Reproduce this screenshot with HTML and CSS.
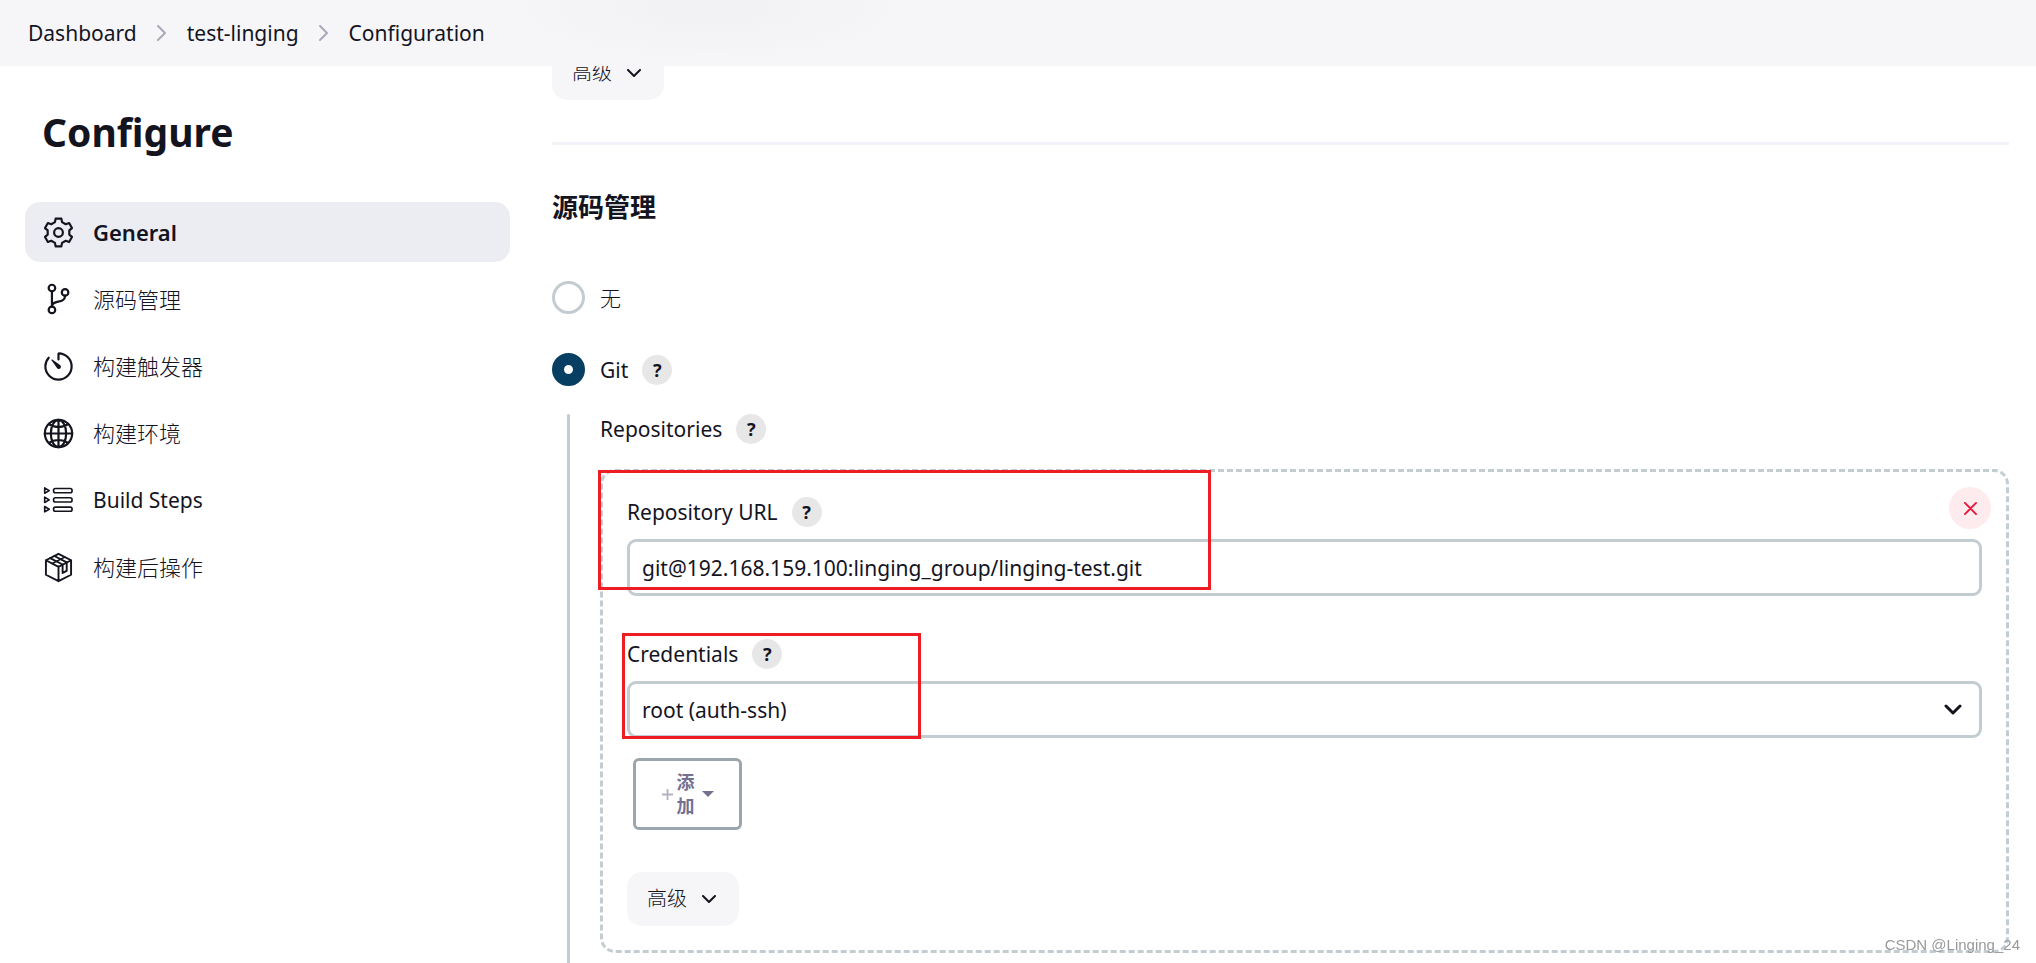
FILE: index.html
```html
<!DOCTYPE html>
<html lang="zh-CN">
<head>
<meta charset="utf-8">
<title>test-linging Config</title>
<link rel="stylesheet" href="styles.css">
</head>
<body>
<header class="breadcrumb-bar">
  <nav class="breadcrumbs" aria-label="Breadcrumb">
    <a href="#">Dashboard</a>
    <svg class="crumb-sep" viewBox="0 0 10 16" aria-hidden="true"><path d="M1 1l7 7-7 7"/></svg>
    <a href="#">test-linging</a>
    <svg class="crumb-sep" viewBox="0 0 10 16" aria-hidden="true"><path d="M1 1l7 7-7 7"/></svg>
    <a href="#">Configuration</a>
  </nav>
</header>
<div class="layout">
  <aside class="side-panel">
    <h1 class="page-title">Configure</h1>
    <nav class="tasks">
      <a class="task task-active" href="#general">
        <svg class="task-icon" viewBox="0 0 512 512" aria-hidden="true"><circle cx="256" cy="256" r="64"/><path d="M204 104L214 53H298L308 104 362 135 411 118 453 191 414 225V287L453 321 411 394 362 377 308 408 298 459H214L204 408 150 377 101 394 59 321 98 287V225L59 191 101 118 150 135z"/></svg>
        General
      </a>
      <a class="task" href="#scm">
        <svg class="task-icon" viewBox="0 0 512 512" aria-hidden="true"><circle cx="160" cy="88" r="48"/><circle cx="160" cy="408" r="48"/><circle cx="352" cy="152" r="48"/><path d="M160 360V136M352 200c0 128-192 48-192 160"/></svg>
        源码管理
      </a>
      <a class="task" href="#triggers">
        <svg class="task-icon" viewBox="0 0 512 512" aria-hidden="true"><path d="M112.91 128A191.85 191.85 0 0064 254c-1.18 106.35 85.65 193.8 192 194 106.2.2 192-85.83 192-192 0-104.54-83.55-189.61-187.5-192a4.36 4.36 0 00-4.5 4.37V152"/><path class="solid" d="M233.38 278.63l-79-113a8.13 8.13 0 0111.32-11.32l113 79a32.5 32.5 0 01-37.25 53.26 33.21 33.21 0 01-8.07-7.94z"/></svg>
        构建触发器
      </a>
      <a class="task" href="#environment">
        <svg class="task-icon" viewBox="0 0 512 512" aria-hidden="true"><circle cx="256" cy="256" r="200"/><path d="M256 56c-58.07 0-112.67 89.13-112.67 200S197.93 456 256 456s112.67-89.13 112.67-200S314.07 56 256 56zM117.33 117.33c38.24 27.15 86.38 43.34 138.67 43.34s100.43-16.19 138.67-43.34M394.67 394.67c-38.24-27.15-86.38-43.34-138.67-43.34s-100.43 16.19-138.67 43.34M256 56v400M456 256H56"/></svg>
        构建环境
      </a>
      <a class="task task-latin" href="#build-steps">
        <svg class="task-icon task-icon-thin" viewBox="0 0 512 512" aria-hidden="true"><rect x="184" y="80" width="270" height="62" rx="26"/><rect x="184" y="216" width="270" height="62" rx="26"/><rect x="184" y="352" width="270" height="62" rx="26"/><path d="M54 72v78l66-39zM54 208v78l66-39zM54 344v78l66-39z"/></svg>
        Build Steps
      </a>
      <a class="task" href="#post-build">
        <svg class="task-icon task-icon-thin" viewBox="0 0 512 512" aria-hidden="true"><path class="outline" d="M256 56L440 150V362L256 456 72 362V150zM72 150L256 246 440 150M256 246V456"/><path class="outline" d="M134 118L316 212V336L376 304V182L196 88"/><path d="M164 198L348 104"/></svg>
        构建后操作
      </a>
    </nav>
  </aside>
  <main class="main-panel">
    <button type="button" class="advanced">高级 <svg class="chevron" viewBox="0 0 14 9" aria-hidden="true"><path d="M1 1l6 6 6-6"/></svg></button>
    <hr class="divider">
    <h2 class="section-title" id="scm">源码管理</h2>
    <div class="radio-row">
      <input class="radio" type="radio" name="scm" id="scm-none"><label class="light" for="scm-none">无</label>
    </div>
    <div class="radio-row">
      <input class="radio" type="radio" name="scm" id="scm-git" checked><label for="scm-git">Git</label>
      <button type="button" class="help" aria-label="Help for Git">?</button>
    </div>
    <div class="nested">
      <div class="label-row"><span>Repositories</span><button type="button" class="help" aria-label="Help for Repositories">?</button></div>
      <section class="repo">
        <button type="button" class="remove" aria-label="Delete"><svg viewBox="0 0 14 14" aria-hidden="true"><path d="M1 1l12 12M13 1L1 13"/></svg></button>
        <div class="field">
          <div class="label-row"><label for="repo-url">Repository URL</label><button type="button" class="help" aria-label="Help for Repository URL">?</button></div>
          <input class="control" id="repo-url" type="text" value="git@192.168.159.100:linging_group/linging-test.git" spellcheck="false">
        </div>
        <div class="field">
          <div class="label-row"><label for="credentials">Credentials</label><button type="button" class="help" aria-label="Help for Credentials">?</button></div>
          <div class="select-wrap">
            <select class="control" id="credentials"><option>root (auth-ssh)</option></select>
            <svg class="select-arrow" viewBox="0 0 18 11" aria-hidden="true"><path d="M2 2l7 7 7-7"/></svg>
          </div>
        </div>
        <button type="button" class="add"><svg class="plus" viewBox="0 0 12 12" aria-hidden="true"><path d="M6 0v12M0 6h12"/></svg><span class="add-text">添加</span><svg class="caret" viewBox="0 0 12 6" aria-hidden="true"><path d="M0 0h12L6 6z"/></svg></button>
        <button type="button" class="advanced">高级 <svg class="chevron" viewBox="0 0 14 9" aria-hidden="true"><path d="M1 1l6 6 6-6"/></svg></button>
        <div class="mark mark-url"></div>
        <div class="mark mark-credentials"></div>
      </section>
    </div>
  </main>
</div>
<div class="watermark">CSDN @Linging_24</div>
</body>
</html>
```
FILE: styles.css
```css
:root {
  --text: #14141f;
  --line: #c3ccd1;
  --soft: #f6f6f9;
  --red: #ee1c23;
}
* { box-sizing: border-box; }
body {
  margin: 0;
  background: #fff;
  color: var(--text);
  font: 400 21px/30px "Noto Sans", "Noto Sans CJK SC", sans-serif;
}
a { color: inherit; text-decoration: none; }
button, input, select { font: inherit; color: inherit; }
button { cursor: pointer; border: 0; }
svg { display: block; flex: none; fill: none; stroke: currentColor; stroke-linecap: round; stroke-linejoin: round; }
.light { font-weight: 300; }

.breadcrumb-bar {
  position: fixed;
  inset: 0 0 auto;
  z-index: 2;
  height: 66px;
  padding: 0 28px;
  display: flex;
  align-items: center;
  background: radial-gradient(ellipse 190px 50px at 710px 8px, #f2f2f5 30%, transparent) #f6f6f9;
}
.breadcrumbs { display: flex; align-items: center; gap: 20px; }
.crumb-sep { width: 10px; height: 16px; stroke: #a9a9bd; stroke-width: 2; }

.layout {
  display: grid;
  grid-template-columns: 485px minmax(0, 1fr);
  gap: 42px;
  min-height: 100vh;
  padding: 0 27px 0 25px;
}
.side-panel { padding-top: 107px; }
.page-title { margin: 0 0 45px; padding-left: 17px; font-size: 39px; line-height: 50px; font-weight: 700; }
.tasks { display: flex; flex-direction: column; gap: 7px; }
.task { display: flex; align-items: center; gap: 17px; height: 60px; padding: 0 16px; border-radius: 15px; font-size: 22px; font-weight: 300; }
.task-latin { font-size: 21px; font-weight: 400; }
.task-active { background: #ecedf3; font-weight: 600; }
.task-icon { width: 35px; height: 35px; stroke-width: 32; }
.task-icon-thin { stroke-width: 24; }
.outline { stroke-width: 28; }
.solid { fill: currentColor; stroke: none; }

.main-panel { display: flex; flex-direction: column; align-items: stretch; padding-top: 46px; }
.advanced {
  align-self: flex-start;
  display: flex;
  align-items: center;
  gap: 15px;
  height: 54px;
  padding: 0 23px 0 20px;
  border-radius: 15px;
  background: var(--soft);
  font-size: 20px;
  font-weight: 300;
}
.chevron { width: 14px; height: 9px; stroke-width: 2; }
.divider { width: 100%; height: 3px; margin: 42px 0; border: 0; background: #f2f2f8; }
.section-title { margin: 0 0 54px; font-size: 26px; line-height: 40px; font-weight: 700; }
.radio-row { display: flex; align-items: center; height: 33px; margin-bottom: 39px; }
.radio {
  appearance: none;
  width: 33px;
  height: 33px;
  margin: 0 15px 0 0;
  border: 3px solid var(--line);
  border-radius: 50%;
}
.radio:checked { border: 12px solid #073f63; }
.help {
  width: 30px;
  height: 30px;
  margin-left: 14px;
  padding: 0;
  border-radius: 50%;
  background: #e7e7e7;
  font-size: 18px;
  line-height: 30px;
  font-weight: 700;
}
.nested {
  flex: 1;
  position: relative;
  margin-top: -11px;
  padding-left: 48px;
}
.nested::before { content: ""; position: absolute; inset: 0 auto 0 15px; width: 3px; border-radius: 2px 2px 0 0; background: var(--line); }
.label-row { display: flex; align-items: center; height: 30px; }
.repo {
  position: relative;
  display: flex;
  flex-direction: column;
  margin: 25px 0 9px;
  padding: 25px 24px 24px;
  border: 3px dashed var(--line);
  border-radius: 15px;
}
.remove {
  position: absolute;
  top: 15px;
  right: 15px;
  display: grid;
  place-items: center;
  width: 42px;
  height: 42px;
  padding: 0;
  border-radius: 50%;
  background: #fdebed;
  color: #e8153a;
}
.remove svg { width: 13px; height: 13px; stroke-width: 2; }
.field { display: flex; flex-direction: column; gap: 12px; margin-bottom: 43px; }
.field + .field { margin-bottom: 20px; }
.control {
  appearance: none;
  width: 100%;
  height: 57px;
  padding: 0 12px;
  border: 3px solid var(--line);
  border-radius: 9px;
  background: #fff;
}
.select-wrap { position: relative; }
.select-arrow { position: absolute; top: 23px; right: 20px; width: 18px; height: 11px; stroke-width: 3; pointer-events: none; }
.add {
  align-self: flex-start;
  display: flex;
  align-items: center;
  justify-content: center;
  gap: 4px;
  width: 109px;
  height: 72px;
  margin: 0 0 42px 6px;
  padding: 0;
  border: 3px solid #9aa6ae;
  border-radius: 6px;
  background: #fff;
  color: #73718f;
  font-size: 18px;
  line-height: 24px;
  font-weight: 700;
}
.add-text { width: 18px; margin-right: 3px; }
.plus { width: 11px; height: 11px; stroke: #b3b1c4; stroke-width: 2; stroke-linecap: butt; }
.caret { width: 12px; height: 6px; fill: currentColor; stroke: none; }
.mark { position: absolute; border: 3px solid var(--red); pointer-events: none; }
.mark-url { top: -2px; left: -5px; width: 613px; height: 120px; }
.mark-credentials { top: 161px; left: 19px; width: 299px; height: 106px; }
.watermark { position: fixed; right: 16px; bottom: 8px; color: #999; font: 15px/20px "Liberation Sans", sans-serif; }
```
